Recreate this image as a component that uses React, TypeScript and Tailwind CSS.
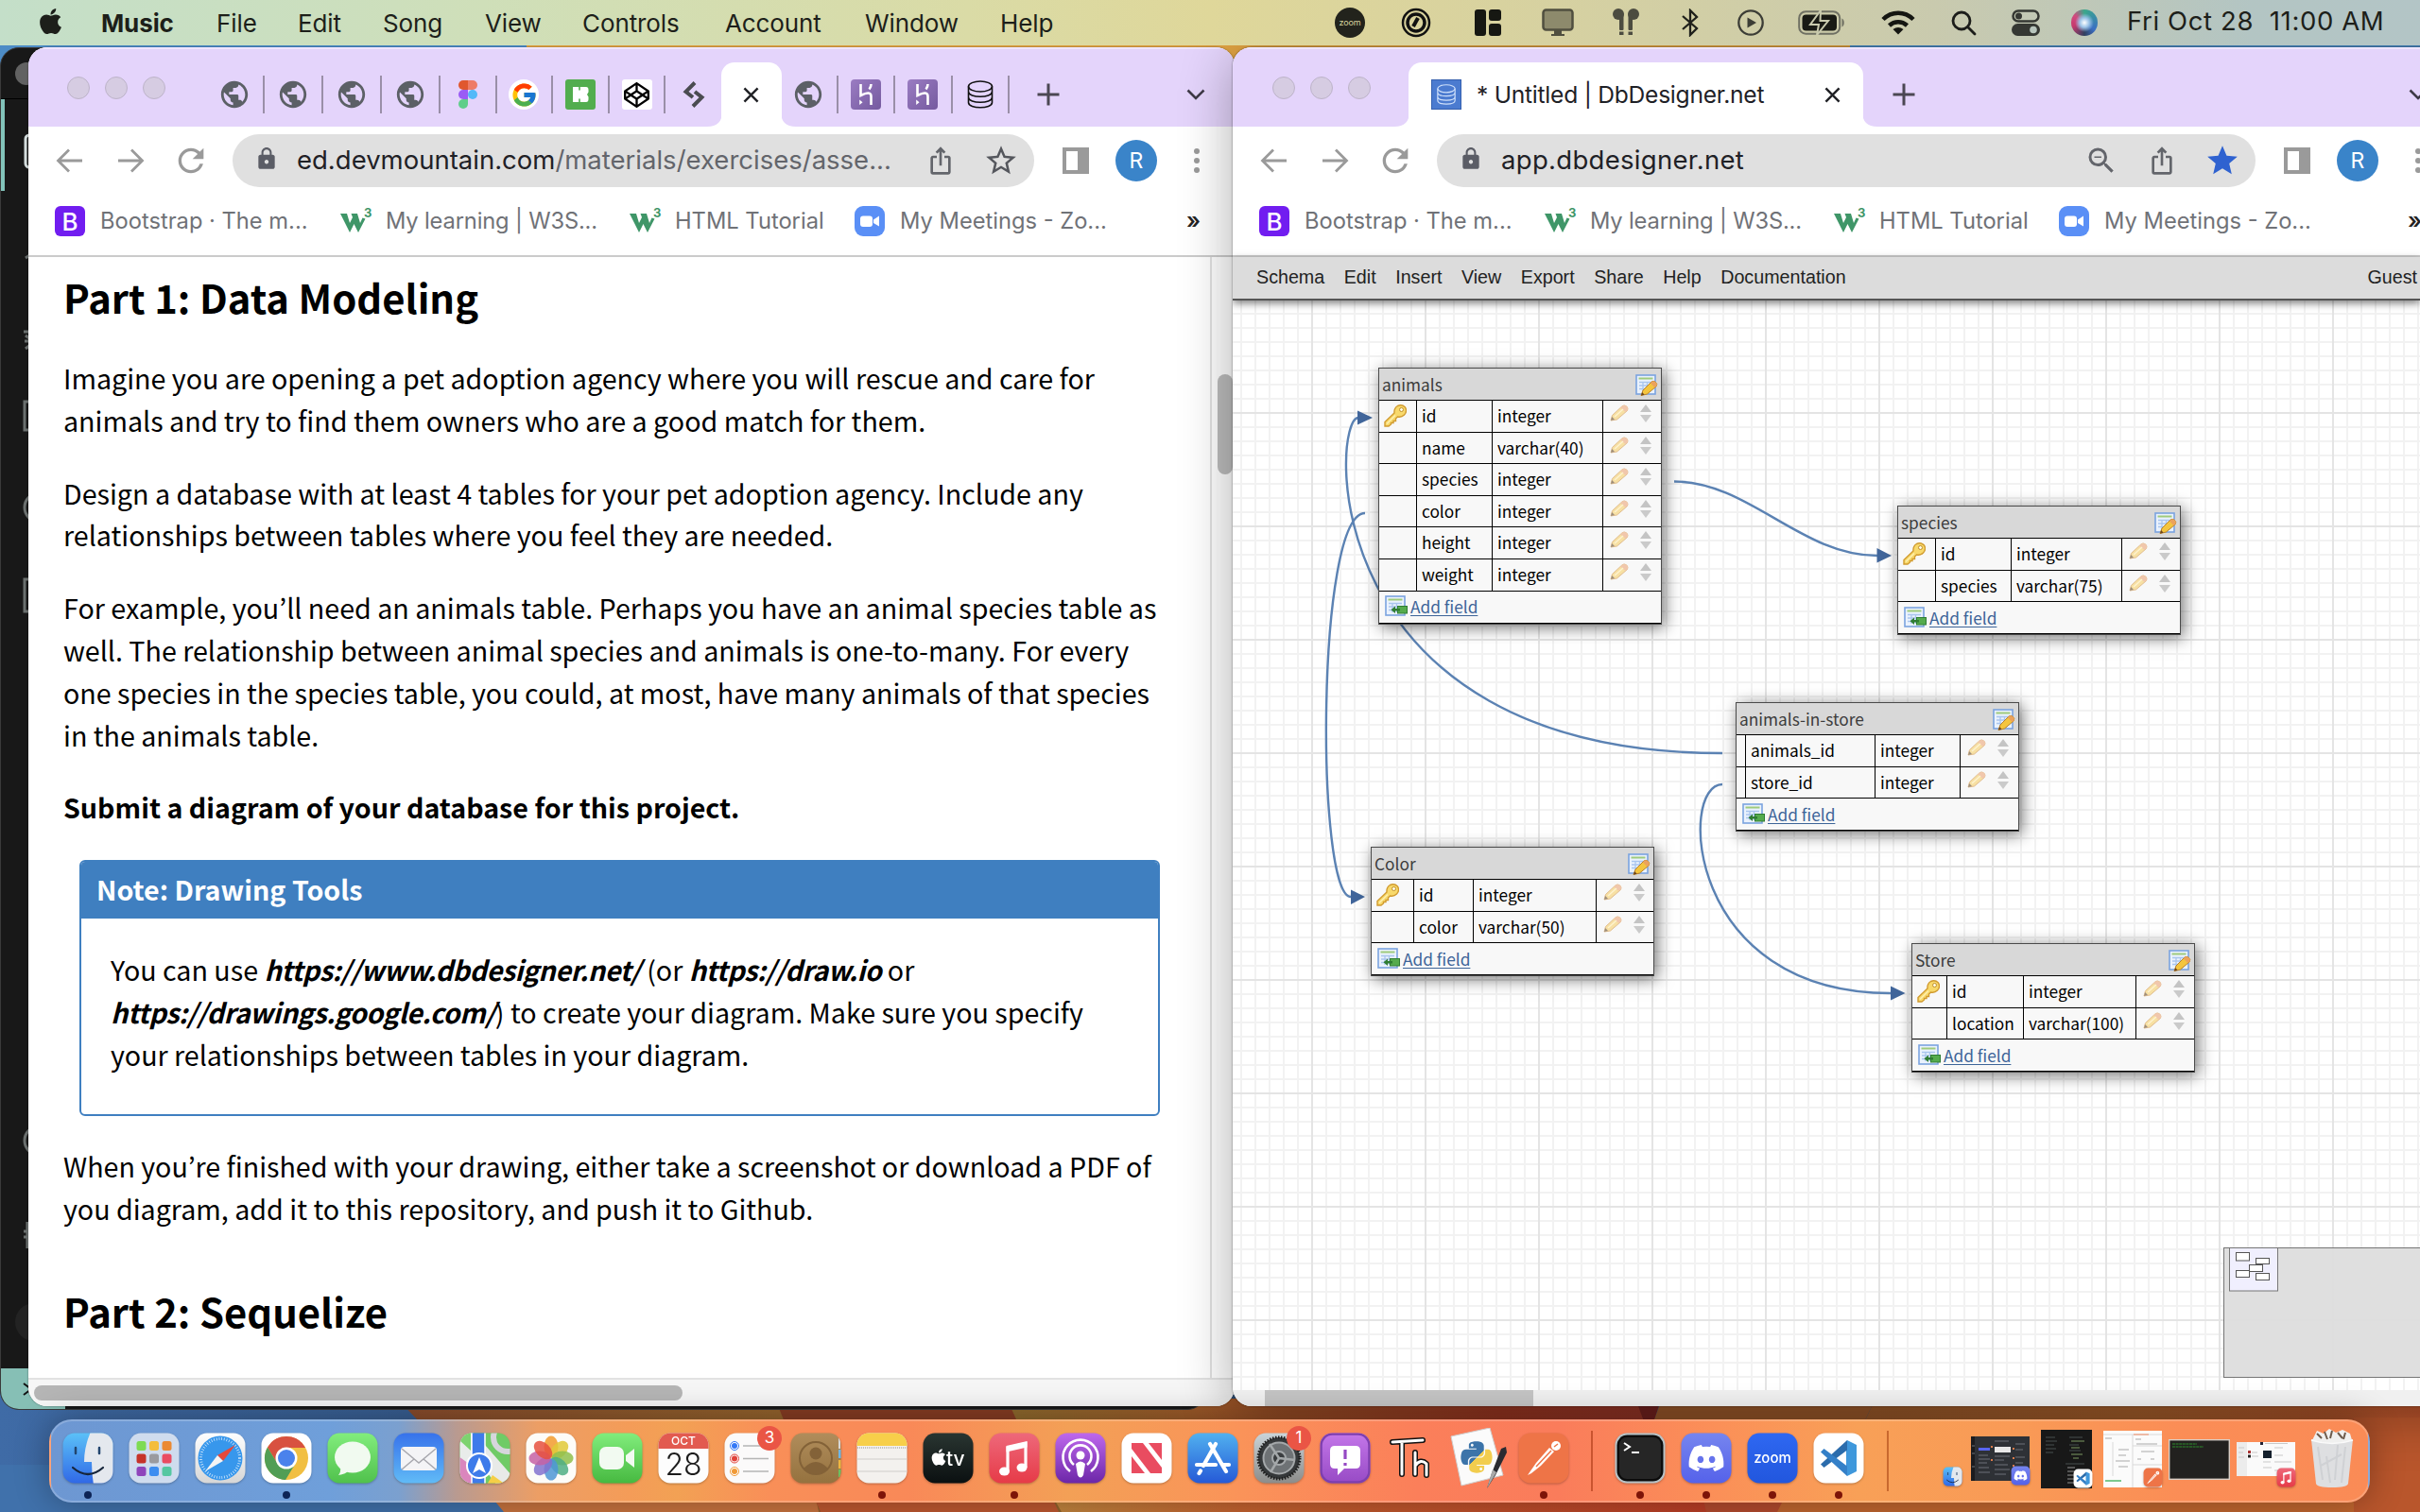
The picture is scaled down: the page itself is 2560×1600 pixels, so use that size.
import React from 'react';
import { FaApple, FaDiscord, FaPython, FaCodepen } from 'react-icons/fa6';
import { FcGoogle } from 'react-icons/fc';
import { MdPublic, MdIosShare, MdRefresh, MdZoomOut, MdStar, MdStarBorder, MdLock } from 'react-icons/md';

type Kids = { children: React.ReactNode };

/* ---------- wallpaper ---------- */
function Wallpaper() {
  return (
    <svg className="absolute inset-0" width="2560" height="1600" viewBox="0 0 2560 1600">
      <defs>
        <linearGradient id="wpBlue" x1="0" x2="1">
          <stop offset="0" stopColor="#3f6ba6" />
          <stop offset="0.35" stopColor="#2f4e78" />
          <stop offset="1" stopColor="#33597f" />
        </linearGradient>
        <linearGradient id="wpBrown" x1="0" x2="1">
          <stop offset="0" stopColor="#874a2b" />
          <stop offset="1" stopColor="#94662c" />
        </linearGradient>
        <linearGradient id="wpMid" x1="0" x2="1">
          <stop offset="0" stopColor="#8c682c" />
          <stop offset="0.35" stopColor="#a15528" />
          <stop offset="0.7" stopColor="#9c3722" />
          <stop offset="1" stopColor="#96352a" />
        </linearGradient>
        <linearGradient id="wpRight" x1="0" x2="1">
          <stop offset="0" stopColor="#9c5a2a" />
          <stop offset="0.5" stopColor="#a8602c" />
          <stop offset="1" stopColor="#b3502a" />
        </linearGradient>
        <linearGradient id="wpLow" x1="0" x2="1">
          <stop offset="0" stopColor="#c1883f" />
          <stop offset="0.3" stopColor="#c4622f" />
          <stop offset="1" stopColor="#b93d26" />
        </linearGradient>
      </defs>
      <rect width="2560" height="1600" fill="#4d8cc6" />
      <rect x="557" y="46" width="1400" height="60" fill="#e0a343" />
      <rect x="0" y="1440" width="2560" height="160" fill="url(#wpBlue)" />
      <rect x="0" y="1550" width="560" height="50" fill="#4071ab" />
      <path d="M420 1480 L535 1600 H900 L820 1480Z" fill="url(#wpBrown)" />
      <path d="M500 1560 L533 1600 H866 L858 1560Z" fill="#c8733f" />
      <path d="M820 1480 L868 1600 H1130 L1065 1480Z" fill="#853b22" />
      <path d="M850 1560 L868 1600 H1130 L1100 1560Z" fill="#be5830" />
      <path d="M1065 1480 L1120 1600 H1810 L1735 1480Z" fill="url(#wpMid)" />
      <path d="M1100 1560 L1123 1600 H1810 L1790 1560Z" fill="url(#wpLow)" />
      <path d="M1730 1480 L1745 1520 L1757 1480Z" fill="#74221f" />
      <path d="M1758 1480 L1740 1530 H1960 L1984 1480Z" fill="#9d5a2b" />
      <path d="M1984 1480 L1960 1530 V1560 H2560 V1480Z" fill="url(#wpRight)" />
      <path d="M1795 1560 L1805 1600 H1882 L1900 1560Z" fill="#b34a2e" />
      <path d="M1900 1560 L1880 1600 H2560 V1560Z" fill="#c0662f" />
      <rect x="2490" y="1500" width="70" height="100" fill="#b9562c" />
    </svg>
  );
}

/* ---------- menu bar ---------- */
const MENU: [string, string][] = [
  ['File', 'w-[86px]'],
  ['Edit', 'w-[90px]'],
  ['Song', 'w-[108px]'],
  ['View', 'w-[103px]'],
  ['Controls', 'w-[151px]'],
  ['Account', 'w-[148px]'],
  ['Window', 'w-[143px]'],
  ['Help', 'w-[80px]'],
];

function MenuBar() {
  return (
    <header className="absolute inset-x-0 top-0 flex h-12 items-center bg-[linear-gradient(90deg,#c4dfc9_0%,#cfdfb9_20%,#dadba6_40%,#dfd79a_50%,#d8d29f_62%,#c9caae_80%,#b3c5c3_93%,#b3c5c6_100%)] pl-[38px] font-['Inter',sans-serif] text-[26px] tracking-[-0.1px] text-[#1d1f1a]">
      <FaApple className="mb-1 mr-[38px] size-[31px]" />
      <span className="w-[122px] font-bold">Music</span>
      {MENU.map(([t, w]) => (
        <span key={t} className={w}>{t}</span>
      ))}
      <div className="ml-[274px] flex h-full items-center">
        <span className="flex size-8 items-center justify-center rounded-full bg-[#22231c] text-[9px] text-[#d8d49f]">zoom</span>
        <svg className="ml-[38px] size-8" viewBox="0 0 32 32" fill="none" stroke="#111" strokeWidth="3">
          <circle cx="16" cy="16" r="14" strokeWidth="2.5" />
          <circle cx="16" cy="16" r="9" strokeWidth="3.5" />
          <path d="M13 20 L18 11" strokeWidth="4" />
        </svg>
        <svg className="ml-[46px] h-[28px] w-[28px]" viewBox="0 0 28 28" fill="#161712">
          <rect width="12" height="28" rx="3" />
          <rect x="15" width="13" height="12" rx="3" />
          <rect x="15" y="15" width="13" height="13" rx="3" />
        </svg>
        <svg className="ml-[43px] h-[30px] w-[34px]" viewBox="0 0 34 30">
          <rect x="1.5" y="1.5" width="31" height="21" rx="3" fill="#8d8a6c" stroke="#504f3f" strokeWidth="2.5" />
          <path d="M13 23h8v4h3v2H10v-2h3z" fill="#504f3f" />
        </svg>
        <svg className="ml-[41px] h-[30px] w-[28px]" viewBox="0 0 28 30" fill="#4c4c40">
          <circle cx="6" cy="6" r="6" />
          <circle cx="22" cy="6" r="6" />
          <rect x="7" y="5" width="4.5" height="18" rx="1" />
          <rect x="16.500" y="5" width="4.500" height="18" rx="1" />
          <rect x="7" y="24.500" width="4.500" height="3.500" />
          <rect x="16.500" y="24.500" width="4.500" height="3.500" />
        </svg>
        <svg className="ml-[44px] h-[30px] w-[20px]" viewBox="0 0 20 30" fill="none" stroke="#1f201b" strokeWidth="2.300">
          <path d="M2 8 L17 21 L10 28 V2 L17 9 L2 22" />
        </svg>
        <svg className="ml-[40px] size-[28px]" viewBox="0 0 28 28">
          <circle cx="14" cy="14" r="12.700" fill="none" stroke="#3c3d36" strokeWidth="2.300" />
          <path d="M10.500 8.500 L20 14 L10.500 19.500Z" fill="#3c3d36" />
        </svg>
        <svg className="ml-[36px] h-[26px] w-[50px]" viewBox="0 0 50 26">
          <rect x="1.200" y="1.200" width="43" height="23.500" rx="7" fill="none" stroke="#6f7063" strokeWidth="2" />
          <rect x="4.500" y="4.500" width="36.500" height="17" rx="4" fill="#191a15" />
          <path d="M46.500 8.500c3 1 3 8 0 9z" fill="#6f7063" />
          <path d="M24 0 L13 15 H22 L20 26 L32 11 H23.500Z" fill="#191a15" stroke="#c9caae" strokeWidth="2" />
        </svg>
        <svg className="ml-[38px] h-[26px] w-[36px]" viewBox="0 0 36 26" fill="none" stroke="#151612" strokeWidth="4.500">
          <path d="M2 9.500 C11 0.500 25 0.500 34 9.500" />
          <path d="M8.500 16 C14 11 22 11 27.500 16" />
          <path d="M18 25.500 L12.500 20 Q18 16 23.500 20Z" fill="#151612" stroke="none" />
        </svg>
        <svg className="ml-[38px] size-[27px]" viewBox="0 0 27 27" fill="none" stroke="#1c1d1a" strokeWidth="2.800" strokeLinecap="round">
          <circle cx="11" cy="11" r="9" />
          <path d="M18 18 L25 25" />
        </svg>
        <svg className="ml-[37px] h-[28px] w-[30px]" viewBox="0 0 30 28">
          <rect x="1.500" y="1.500" width="27" height="11" rx="5.500" fill="none" stroke="#353833" strokeWidth="2.500" />
          <circle cx="7.500" cy="7" r="3.500" fill="#353833" />
          <rect y="15" width="30" height="13" rx="6.500" fill="#353833" />
          <circle cx="23" cy="21.500" r="3.800" fill="#b8c6bd" />
        </svg>
        <span className="ml-[33px] size-[28px] rounded-full bg-[radial-gradient(circle_at_50%_50%,#fff_0%,#9cc4e8_25%,transparent_50%),conic-gradient(#3aa88b,#3a6fc4_35%,#30405e_50%,#c53a6e_70%,#d24a7f_85%,#3aa88b)]" />
        <span className="mb-[3px] ml-[31px] whitespace-pre text-[27.500px] tracking-[0.620px]">Fri Oct 28  11:00 AM</span>
      </div>
    </header>
  );
}

/* ---------- editor window behind ---------- */
function EditorWindow() {
  return (
    <section className="absolute left-0 top-[50px] flex h-[1442px] w-[1276px] flex-col overflow-hidden rounded-[20px] border border-[#3a3a3a] bg-[#181818]">
      <div className="flex h-[54px] items-center border-b border-black pl-[15px]">
        <span className="size-6 rounded-full bg-[#626262]" />
      </div>
      <div className="relative flex-1">
        <span className="absolute left-0 top-0 h-[97px] w-1 bg-[#82c3ba]" />
        <svg className="absolute left-[22px] top-0" width="30" height="1340" viewBox="0 0 30 1340" fill="none" stroke="#6b706f" strokeWidth="3">
          <rect x="4" y="38" width="24" height="34" rx="4" stroke="#d5dede" />
          <path d="M4 168 L10 164" />
          <path d="M2 246h12M3 256h10M4 264l10-8M4 250l8 6" />
          <rect x="3" y="320" width="20" height="30" />
          <circle cx="18" cy="432" r="15" />
          <rect x="3" y="508" width="24" height="34" />
          <circle cx="18" cy="1102" r="15" />
          <path d="M2 1198h14M2 1204h12M6 1188v28" />
        </svg>
        <span className="absolute left-[15px] top-[1274px] size-10 rounded-full bg-[#232323]" />
      </div>
      <div className="flex h-[43px] w-[68px] items-center bg-[#86bfb5] pl-[22px]">
        <svg className="size-4" viewBox="0 0 16 16" fill="none" stroke="#111" strokeWidth="2"><path d="M2 2l8 6-8 6" /></svg>
      </div>
    </section>
  );
}

/* ---------- browser chrome ---------- */
function Lights({ cls }: { cls: string }) {
  return (
    <div className={`flex gap-4 ${cls}`}>
      {[0, 1, 2].map((i) => (
        <span key={i} className="size-6 rounded-full border border-[#bdb3c9] bg-[#d6cce2]" />
      ))}
    </div>
  );
}

function Cross() {
  return (
    <svg className="size-[17px]" viewBox="0 0 18 18" stroke="#222327" strokeWidth="2.600">
      <path d="M1.500 1.500 L16.500 16.500 M16.500 1.500 L1.500 16.500" />
    </svg>
  );
}
function Plus() {
  return (
    <svg className="size-6" viewBox="0 0 24 24" stroke="#4b4753" strokeWidth="3">
      <path d="M12 0.500V23.500M0.500 12H23.500" />
    </svg>
  );
}
function Chevron() {
  return (
    <svg className="h-[12px] w-[20px]" viewBox="0 0 20 12" fill="none" stroke="#3f3a48" strokeWidth="2.600">
      <path d="M1.500 1.500 L10 10 L18.500 1.500" />
    </svg>
  );
}
function FigmaMark() {
  return (
    <svg className="h-[30px] w-[20px]" viewBox="0 0 20 30">
      <path d="M10 0H5a5 5 0 0 0 0 10h5z" fill="#e0572e" />
      <path d="M10 0h5a5 5 0 0 1 0 10h-5z" fill="#ee7b66" />
      <path d="M10 10H5a5 5 0 0 0 0 10h5z" fill="#9a5cf5" />
      <circle cx="15" cy="15" r="5" fill="#53b9f8" />
      <path d="M10 20H5a5 5 0 1 0 5 5z" fill="#5fce8a" />
    </svg>
  );
}
function Cylinder({ stroke, cls }: { stroke: string; cls: string }) {
  return (
    <svg className={cls} viewBox="0 0 28 30" fill="none" stroke={stroke} strokeWidth="1.600">
      <ellipse cx="14" cy="6.500" rx="12.500" ry="5.500" />
      <path d="M1.500 6.500v17c0 7 25 7 25 0v-17M1.500 12c0 7 25 7 25 0M1.500 18c0 7 25 7 25 0" />
    </svg>
  );
}
function TabIcon({ children, line = true, w = 'w-[59.600px]' }: Kids & { line?: boolean; w?: string }) {
  return (
    <div className={`flex h-10 items-center justify-center ${w} ${line ? 'border-r-2 border-[#9a8fa8]' : ''}`}>{children}</div>
  );
}
const Globe = () => <MdPublic className="size-[34px] text-[#5c6066]" />;
function HerokuFav() {
  return (
    <svg className="size-8" viewBox="0 0 32 32" fill="none" stroke="#fff" strokeWidth="2.600">
      <defs>
        <linearGradient id="hk" x1="0" y1="0" x2="1" y2="1">
          <stop offset="0" stopColor="#9a7cc2" />
          <stop offset="1" stopColor="#755a9f" />
        </linearGradient>
      </defs>
      <rect width="32" height="32" rx="4" fill="url(#hk)" stroke="none" />
      <path d="M10.500 5V17Q21.500 11.500 21.500 18V27M21.500 5Q21.500 8 19.500 10.500" />
      <path d="M9.200 21.500L12.500 24.200L9.200 27Z" fill="#fff" stroke="none" />
    </svg>
  );
}

/* flared lower corners that join the active tab to the toolbar */
function Flare({ flip = false }: { flip?: boolean }) {
  return (
    <svg className={`size-4 self-end ${flip ? '-ml-px -mr-4' : '-ml-4 -mr-px'}`} viewBox="0 0 16 16">
      <path d={flip ? 'M0 0 Q0 16 16 16 H0Z' : 'M16 0 Q16 16 0 16 H16Z'} fill="#fff" />
    </svg>
  );
}

function Toolbar({ host, path, zoomed, widthCls, textCls }: { host: string; path?: string; zoomed?: boolean; widthCls: string; textCls: string }) {
  return (
    <div className="flex h-[72px] shrink-0 items-center pl-[28px] text-[#9a9a9a]">
      <svg className="h-[26px] w-[32px]" viewBox="0 0 32 26" fill="none" stroke="currentColor" strokeWidth="2.800">
        <path d="M29 13H4M15 1.500L3.500 13L15 24.500" />
      </svg>
      <svg className="ml-[32px] h-[26px] w-[32px]" viewBox="0 0 32 26" fill="none" stroke="currentColor" strokeWidth="2.800">
        <path d="M3 13H28M17 1.500L28.500 13L17 24.500" />
      </svg>
      <MdRefresh className="ml-[28px] size-[40px]" />
      <div className={`ml-[24px] flex h-14 items-center rounded-full bg-[#e0e0e0] pl-[23px] pr-[16px] ${widthCls}`}>
        <MdLock className="mb-1 size-[26px] text-[#5b5d66]" />
        <span className={`ml-[19px] flex-1 whitespace-nowrap font-['Inter',sans-serif] text-[27.500px] text-[#1f2126] ${textCls}`}>
          {host}
          {path && <span className="text-[#63656b]">{path}</span>}
        </span>
        {zoomed && <MdZoomOut className="mr-[30px] size-[36px] text-[#63656b]" />}
        <MdIosShare className="size-[32px] text-[#63656b]" />
        {zoomed ? <MdStar className="ml-[29px] size-[38px] text-[#2f62d0]" /> : <MdStarBorder className="ml-[29px] size-[38px] text-[#55575d]" />}
      </div>
      <svg className="ml-[30px] size-7" viewBox="0 0 28 28">
        <path d="M0 0H28V28H0Z M4 4V24H16V4Z" fillRule="evenodd" fill="#9a9a9a" />
      </svg>
      <span className="ml-[28px] flex size-11 shrink-0 items-center justify-center rounded-full bg-[#3a84c9] font-['Inter',sans-serif] text-[23px] text-white">R</span>
      <div className="ml-[39px] flex flex-col gap-[4px]">
        {[0, 1, 2].map((i) => (
          <span key={i} className="size-[6px] rounded-full bg-[#9a9a9a]" />
        ))}
      </div>
    </div>
  );
}

function W3() {
  return (
    <svg className="h-[26px] w-[34px] overflow-visible font-['Inter',sans-serif]" viewBox="0 0 34 26">
      <path d="M0 5h7l3 10 3-6-1.500-4h6.500l3 10 2.500-5.500 3 1L19 25l-4.500-9L10 25Z" fill="#3f9668" />
      <text x="25" y="9" fontSize="13" fontWeight="700" fill="#3f9668">3</text>
    </svg>
  );
}

function Bookmarks({ lastCls }: { lastCls: string }) {
  return (
    <div className="flex h-[66px] shrink-0 items-center border-b-2 border-[#cbcbcb] pb-[8px] pl-[28px] font-['Inter',sans-serif] text-[23.700px] text-[#707277]">
      <span className="flex size-8 items-center justify-center rounded-[6px] bg-[#711df0] text-[26px] font-medium text-white">B</span>
      <span className="ml-4 w-[254px] whitespace-nowrap">Bootstrap · The m...</span>
      <W3 />
      <span className="ml-[14px] w-[258px] whitespace-nowrap tracking-[-0.150px]">My learning | W3S...</span>
      <W3 />
      <span className="ml-[14px] w-[190px] whitespace-nowrap">HTML Tutorial</span>
      <svg className="size-8" viewBox="0 0 32 32">
        <rect width="32" height="32" rx="9" fill="#5a8ff6" />
        <rect x="6" y="10.500" width="13" height="11.500" rx="3" fill="#fff" />
        <path d="M20 14.500 L26 10.500V21.500L20 18Z" fill="#fff" />
      </svg>
      <span className={`ml-[16px] whitespace-nowrap ${lastCls}`}>My Meetings - Zo...</span>
      <span className="font-semibold text-[#222]">»</span>
    </div>
  );
}

/* ---------- left browser ---------- */
const Para = ({ children }: Kids) => <p className="mb-[32px] whitespace-nowrap leading-[44.800px]">{children}</p>;
const Url = ({ children }: Kids) => <b className="italic tracking-[-0.450px]">{children}</b>;

function LeftBrowser() {
  return (
    <section className="absolute left-[30px] top-[50px] flex h-[1438px] w-[1276px] flex-col overflow-hidden rounded-[20px] bg-white shadow-[0_0_2px_rgba(0,0,0,0.5)]">
      <div className="flex h-[84px] shrink-0 items-center border-t-2 border-[#f0e6ff] bg-[#e4d4fb]">
        <Lights cls="ml-[41px] mb-px mr-[43px]" />
        <div className="flex h-full items-center pt-[14px]">
          <TabIcon w="w-[62px]"><Globe /></TabIcon>
          <TabIcon w="w-[62px]"><Globe /></TabIcon>
          <TabIcon w="w-[62px]"><Globe /></TabIcon>
          <TabIcon w="w-[62px]"><Globe /></TabIcon>
          <TabIcon><FigmaMark /></TabIcon>
          <TabIcon><span className="flex size-8 items-center justify-center rounded-full bg-white"><FcGoogle className="size-[29px]" /></span></TabIcon>
          <TabIcon>
            <svg className="size-8" viewBox="0 0 32 32">
              <rect width="32" height="32" rx="3" fill="#52ad4e" />
              <path d="M8 8H22Q24.500 8 24.500 11V13.500L23 16L24.500 18.500V21Q24.500 24 22 24H8Z" fill="#fff" />
              <path d="M15 7.500V11.500M15 20.500V24.500" stroke="#52ad4e" strokeWidth="1.600" />
            </svg>
          </TabIcon>
          <TabIcon><span className="flex size-8 items-center justify-center rounded-[3px] bg-white"><FaCodepen className="size-[27px] text-black" /></span></TabIcon>
          <TabIcon line={false}>
            <svg className="h-[28px] w-[24px]" viewBox="0 0 24 28" fill="none" stroke="#4a4b50" strokeWidth="4">
              <path d="M13 1.500 L3.500 11 L11 17 M11 26.500 L20.500 17 L13 11" />
            </svg>
          </TabIcon>
        </div>
        <div className="flex h-full items-end">
          <Flare />
          <div className="flex h-[68px] w-[64px] items-center justify-center rounded-t-[14px] bg-white"><Cross /></div>
          <Flare flip />
        </div>
        <div className="flex h-full items-center pt-[14px]">
          <TabIcon w="w-[60.600px]"><Globe /></TabIcon>
          <TabIcon w="w-[60.600px]"><HerokuFav /></TabIcon>
          <TabIcon w="w-[60.600px]"><HerokuFav /></TabIcon>
          <TabIcon w="w-[60.600px]"><Cylinder stroke="#111" cls="h-[30px] w-[28px]" /></TabIcon>
        </div>
        <div className="ml-[29px] mt-[14px]"><Plus /></div>
        <div className="ml-[134px] mt-[14px]"><Chevron /></div>
      </div>
      <Toolbar host="ed.devmountain.com" path="/materials/exercises/asse..." widthCls="w-[848px]" textCls="" />
      <Bookmarks lastCls="w-[303px]" />
      <div className="flex h-[1186px]">
        <article className="w-[1252px] border-r-2 border-[#e2e2e2] pl-[37px] pt-[11px] font-['Noto_Sans_CJK_KR',sans-serif] text-[28.650px] text-black">
          <h2 className="mb-[32px] text-[41.800px] font-bold leading-[63px]">Part 1: Data Modeling</h2>
          <Para>Imagine you are opening a pet adoption agency where you will rescue and care for<br />animals and try to find them owners who are a good match for them.</Para>
          <Para>Design a database with at least 4 tables for your pet adoption agency. Include any<br />relationships between tables where you feel they are needed.</Para>
          <Para>For example, you’ll need an animals table. Perhaps you have an animal species table as<br />well. The relationship between animal species and animals is one-to-many. For every<br />one species in the species table, you could, at most, have many animals of that species<br />in the animals table.</Para>
          <Para><b>Submit a diagram of your database for this project.</b></Para>
          <div className="ml-[17px] mt-[33px] w-[1143px] overflow-hidden rounded-[6px] border-2 border-[#3f7fc0]">
            <div className="h-[60px] bg-[#3f7fc0] pl-4 font-bold leading-[58px] text-white">Note: Drawing Tools</div>
            <p className="h-[207px] whitespace-nowrap pl-[31px] pt-[31px] leading-[45px]">
              You can use <Url>https://www.dbdesigner.net/</Url> (or <Url>https://draw.io</Url> or<br />
              <Url>https://drawings.google.com/</Url>) to create your diagram. Make sure you specify<br />
              your relationships between tables in your diagram.
            </p>
          </div>
          <p className="mt-[31px] whitespace-nowrap leading-[44.800px]">When you’re finished with your drawing, either take a screenshot or download a PDF of<br />you diagram, add it to this repository, and push it to Github.</p>
          <h2 className="mt-[54px] text-[41.800px] font-bold leading-[63px]">Part 2: Sequelize</h2>
        </article>
        <div className="flex-1 pl-[6px] pt-[124px]">
          <div className="h-[106px] w-4 rounded-full bg-[#bdbdbd]" />
        </div>
      </div>
      <div className="flex-1 border-t-2 border-[#e2e2e2] bg-[#f6f6f6] pl-[6px] pt-[6px]">
        <div className="h-4 w-[686px] rounded-full bg-[#b5b5b5]" />
      </div>
    </section>
  );
}

/* ---------- schema tables ---------- */
function PencilIcon({ cls }: { cls: string }) {
  return (
    <svg className={cls} viewBox="0 0 20 18">
      <path d="M1 17 L2.500 11.500 L13 1.800 Q15 0 17.500 1.800 Q20 4 18.500 6.500 L7.500 16Z" fill="#f7dc95" stroke="#dcb27c" strokeWidth="1" />
      <path d="M13 1.800 Q15 0 17.500 1.800 Q20 4 18.500 6.500 L16.500 8 L11.300 3.500Z" fill="#f0bf9f" />
      <path d="M1 17 L2.200 13 L5 16Z" fill="#8d7b66" />
      <path d="M5 13 L14 5" stroke="#fff2c8" strokeWidth="1.500" />
    </svg>
  );
}
function SheetIcon({ kind }: { kind: 'edit' | 'add' }) {
  return (
    <svg className="size-6 shrink-0" viewBox="0 0 24 24">
      <rect x="1" y="1" width="20" height="20" fill="#eaf2fd" stroke="#7ba3df" strokeWidth="1.600" />
      <path d="M3.500 4.500h15" stroke="#9fcb7c" strokeWidth="2" />
      <path d="M4 8.500h14M4 12h14M4 15.500h14M8 8v10M12.500 8v10" stroke="#a9c5ee" strokeWidth="1.300" />
      {kind === 'edit' ? (
        <g>
          <path d="M6 22.500 L8 17 L17 8 Q19 6.500 21 8 Q24 10.500 22 13 L12.500 21Z" fill="#f4c53e" stroke="#b9822a" strokeWidth="1" />
          <path d="M17 8 Q19 6.500 21 8 Q24 10.500 22 13 L20.500 14.300 L15.800 9.200Z" fill="#eba25c" />
          <path d="M6 22.500 L7.200 19 L9.600 21.800Z" fill="#6b431c" />
        </g>
      ) : (
        <g>
          <rect x="13.500" y="11.500" width="10" height="7.500" fill="#55ab4d" stroke="#2f7d33" />
          <path d="M6.500 15.300 L11 11.500V14h5v2.600h-5V19Z" fill="#2f7d33" />
        </g>
      )}
    </svg>
  );
}
function KeyIcon() {
  return (
    <svg className="size-6" viewBox="0 0 24 24">
      <path d="M1 23 V18.500 L11 9 Q10.500 4 14.500 1.500 Q19 -0.500 22.500 3 Q25 7.500 21.500 11 Q18.500 14 14.500 13 L12.500 15 V17.500 H10 V19.500 H7.500 V21 L5 23Z" fill="#f8d96b" stroke="#d19b2f" strokeWidth="1.400" />
      <circle cx="18.500" cy="5.500" r="2" fill="#fffbe8" stroke="#c08f2c" />
      <path d="M3 20.500 L12 11.500" stroke="#fdf0b0" strokeWidth="1.500" />
    </svg>
  );
}

type Table = { name: string; x: number; y: number; cols: [number, number, number]; rows: [string, string, boolean][] };
const TABLES: Table[] = [
  { name: 'animals', x: 1458, y: 389, cols: [40, 80, 117], rows: [['id', 'integer', true], ['name', 'varchar(40)', false], ['species', 'integer', false], ['color', 'integer', false], ['height', 'integer', false], ['weight', 'integer', false]] },
  { name: 'species', x: 2007, y: 535, cols: [40, 80, 117], rows: [['id', 'integer', true], ['species', 'varchar(75)', false]] },
  { name: 'animals-in-store', x: 1836, y: 743, cols: [10, 137, 90], rows: [['animals_id', 'integer', false], ['store_id', 'integer', false]] },
  { name: 'Color', x: 1450, y: 896, cols: [45, 63, 130], rows: [['id', 'integer', true], ['color', 'varchar(50)', false]] },
  { name: 'Store', x: 2022, y: 998, cols: [37, 81, 119], rows: [['id', 'integer', true], ['location', 'varchar(100)', false]] },
];

function SchemaTable({ t }: { t: Table }) {
  return (
    <div
      className="absolute w-[300px] border border-[#4a4a4a] bg-[#f8f8f8] font-['Noto_Sans_CJK_KR',sans-serif] text-[17.300px] leading-[31px] text-black shadow-[3px_3px_16px_rgba(0,0,0,0.55)]"
      style={{ left: t.x - 1304, top: t.y - 318 }}
    >
      <div className="flex h-[33px] items-center justify-between bg-[#d8d8d8] pl-[3px] pr-[3px] text-[#3c3c3c]">
        <span>{t.name}</span>
        <div className="pt-[3px]"><SheetIcon kind="edit" /></div>
      </div>
      {t.rows.map(([n, ty, key]) => (
        <div key={n} className="grid h-[33.600px] border-t border-black" style={{ gridTemplateColumns: `${t.cols[0]}px ${t.cols[1]}px ${t.cols[2]}px 1fr` }}>
          <div className="border-r border-black pl-[5px] pt-1">{key && <KeyIcon />}</div>
          <div className="border-r border-black pl-[5px]">{n}</div>
          <div className="border-r border-black pl-[5px]">{ty}</div>
          <div className="flex pl-[7px] pt-[4px]">
            <PencilIcon cls="h-[18px] w-[20px] opacity-85" />
            <svg className="ml-3 h-[19px] w-[12px]" viewBox="0 0 12 19">
              <path d="M6 0 L12 8H0Z" fill="#c4c4c4" />
              <path d="M6 19 L12 11H0Z" fill="#cacaca" />
            </svg>
          </div>
        </div>
      ))}
      <div className="flex h-[35px] items-center border-b border-t border-black pl-[6px]">
        <SheetIcon kind="add" />
        <span className="mb-px ml-[3px] text-[#3d6498] underline decoration-1 underline-offset-[2px]">Add field</span>
      </div>
    </div>
  );
}

function Connectors() {
  return (
    <svg className="absolute inset-0" width="1256" height="1154" viewBox="1304 318 1256 1154" fill="none" stroke="#5b82b3" strokeWidth="2.400">
      <path d="M1822 797 C1389 797 1408 442 1437 442" />
      <path d="M1444 543 C1392 543 1392 949 1429 949" />
      <path d="M1771 509.500 C1850 509.500 1905 588 1986 588" />
      <path d="M1822 830 C1775 830 1783 1051 2000 1051" />
      <g fill="#41669b" stroke="none">
        <path d="M1436 434.500 L1452 442 L1436 449.500Z" />
        <path d="M1429 941.500 L1444 949 L1429 957Z" />
        <path d="M1985.500 580 L2001 588 L1985.500 595.500Z" />
        <path d="M2000 1043.500 L2015.500 1051 L2000 1058.500Z" />
      </g>
    </svg>
  );
}

const MINI: [number, number, number, number][] = [
  [7.500, 4.500, 14, 8.500],
  [28.500, 10.500, 14, 6],
  [7.500, 23.500, 14, 7],
  [21.500, 17.500, 14, 7],
  [28.500, 26.500, 14, 7],
];

/* ---------- right browser ---------- */
function RightBrowser() {
  return (
    <section className="absolute left-[1304px] top-[50px] flex h-[1438px] w-[1400px] flex-col overflow-hidden rounded-[20px] bg-white shadow-[0_0_2px_rgba(0,0,0,0.6),0_10px_56px_rgba(0,0,0,0.32)]">
      <div className="flex h-[84px] shrink-0 items-center border-t-2 border-[#f0e6ff] bg-[#e4d4fb]">
        <Lights cls="ml-[42px] mb-px mr-[41px]" />
        <div className="flex h-full items-end">
          <Flare />
          <div className="flex h-[68px] w-[481px] items-center rounded-t-[14px] bg-white pl-[24px] pr-[24px]">
            <span className="flex size-8 items-center justify-center border border-[#345fae] bg-[#4b7bd0]">
              <Cylinder stroke="#cfe0fa" cls="h-[22px] w-[22px]" />
            </span>
            <span className="ml-[16px] flex-1 font-['Inter',sans-serif] text-[24.600px] tracking-[-0.250px] text-[#1f2126]">* Untitled | DbDesigner.net</span>
            <Cross />
          </div>
          <Flare flip />
        </div>
        <div className="ml-[32px] mt-[14px]"><Plus /></div>
        <div className="ml-[522px] mt-[14px]"><Chevron /></div>
      </div>
      <Toolbar host="app.dbdesigner.net" zoomed widthCls="w-[866px]" textCls="tracking-[0.300px]" />
      <Bookmarks lastCls="w-[321px]" />
      <nav className="relative z-10 flex h-[46px] w-[1256px] shrink-0 items-center gap-[20.500px] border-b-2 border-[#555] bg-[#dcdcdc] pl-[25px] font-['Liberation_Sans',sans-serif] text-[19.700px] text-[#222] shadow-[0_3px_8px_rgba(0,0,0,0.5)]">
        {['Schema', 'Edit', 'Insert', 'View', 'Export', 'Share', 'Help', 'Documentation'].map((m) => (
          <span key={m}>{m}</span>
        ))}
        <span className="ml-auto pr-[3px]">Guest</span>
      </nav>
      <div className="relative h-[1153px] w-[1256px] overflow-hidden bg-white bg-[linear-gradient(90deg,#e4e4e4_2px,transparent_2px),linear-gradient(#e4e4e4_2px,transparent_2px),linear-gradient(90deg,#f2f2f2_2px,transparent_2px),linear-gradient(#f2f2f2_2px,transparent_2px)] bg-[length:120px_120px,120px_120px,15px_15px,15px_15px] bg-[position:83px_118px,83px_118px,8px_13px,8px_13px]">
        <Connectors />
        {TABLES.map((t) => (
          <SchemaTable key={t.name} t={t} />
        ))}
        <div className="absolute left-[1048px] top-[1002px] h-[138px] w-[220px] border border-[#757575] bg-[#dededef5]">
          <svg className="ml-[5px]" width="53" height="46" viewBox="0 0 53 46">
            <rect x="0.500" y="-1" width="51" height="46" fill="#f0effe" stroke="#777" />
            {MINI.map(([x, y, w, h]) => (
              <rect key={`${x}-${y}`} x={x} y={y} width={w} height={h} fill="#fff" stroke="#555" />
            ))}
          </svg>
        </div>
      </div>
      <div className="flex-1 bg-[#f0f0f0] pl-[34px]">
        <div className="h-full w-[284px] bg-[#c4c4c4]" />
      </div>
    </section>
  );
}

/* ---------- dock ---------- */
function Tile({ fill, children, id }: { fill: string | [string, string]; children?: React.ReactNode; id: string }) {
  return (
    <svg className="size-[56px] overflow-visible drop-shadow-[0_1px_1px_rgba(0,0,0,0.25)]" viewBox="0 0 56 56">
      {Array.isArray(fill) && (
        <linearGradient id={id} x1="0" y1="0" x2="0" y2="1">
          <stop offset="0" stopColor={fill[0]} />
          <stop offset="1" stopColor={fill[1]} />
        </linearGradient>
      )}
      <clipPath id={`${id}-clip`}><rect x="1.500" y="1.500" width="53" height="53" rx="12.500" /></clipPath>
      <g clipPath={`url(#${id}-clip)`}>
        <rect width="56" height="56" fill={Array.isArray(fill) ? `url(#${id})` : fill} />
        {children}
      </g>
    </svg>
  );
}

function Slot({ children, dot, badge }: Kids & { dot?: string; badge?: string }) {
  return (
    <div className="relative flex h-full w-[70px] shrink-0 flex-col items-center pt-[11px]">
      {children}
      {badge && (
        <span className="absolute left-[43px] top-[5px] flex size-[26px] items-center justify-center rounded-full bg-[#ea5545] font-['Inter',sans-serif] text-[17px] text-white">{badge}</span>
      )}
      {dot && <span className={`mt-[7px] size-2 rounded-full ${dot}`} />}
    </div>
  );
}

function FinderFace({ id }: { id: string }) {
  return (
    <Tile id={id} fill={['#5cc3f8', '#2f66e6']}>
      <path d="M31 0 Q24 16 24 32 H32 Q32 45 34 56 H56 V0Z" fill="#e4e8ee" />
      <path d="M15 17v6M40 17v6" stroke="#22456e" strokeWidth="2.500" strokeLinecap="round" />
      <path d="M12 38 Q28 52 44 38" fill="none" stroke="#17263c" strokeWidth="2.200" strokeLinecap="round" />
    </Tile>
  );
}
function MusicTile({ id }: { id: string }) {
  return (
    <Tile id={id} fill={['#ee6a7c', '#e63946']}>
      <path d="M21 42V17 L40 12.500V38" fill="none" stroke="#fff" strokeWidth="3.200" />
      <path d="M19.500 15 L41.500 10v6.500 L19.500 21.500Z" fill="#fff" />
      <ellipse cx="17.500" cy="42" rx="5.500" ry="4.500" fill="#fff" />
      <ellipse cx="36" cy="38" rx="5.500" ry="4.500" fill="#fff" />
    </Tile>
  );
}
function CodeTile({ id }: { id: string }) {
  return (
    <Tile id={id} fill="#fff">
      <path d="M37 9 L47 14V42L37 47 L36 37V19Z" fill="#3f98dc" />
      <path d="M37 9 L9 34.500 L12.500 38 L37 19.500Z" fill="#2b6cac" />
      <path d="M37 47 L9 21.500 L12.500 18 L37 36.500Z" fill="#3480c8" />
    </Tile>
  );
}
function DiscordTile({ id }: { id: string }) {
  return (
    <Tile id={id} fill={['#7786ef', '#5461ea']}>
      <FaDiscord x="8" y="8" size={40} color="#fff" />
    </Tile>
  );
}
function PostmanTile({ id }: { id: string }) {
  return (
    <Tile id={id} fill="#ee7447">
      <path d="M11 46 L20 33 L34 17 L39 21 L25 36 L15 44Z" fill="#fff" />
      <circle cx="41" cy="15" r="5" fill="#fff" />
      <path d="M20 37 L36 20M39 16l4-3" stroke="#ee7447" strokeWidth="1.500" />
    </Tile>
  );
}

const PETALS: [number, string][] = [
  [0, '#f29b2e'], [45, '#e0c93a'], [90, '#8fbf4c'], [135, '#4fae84'], [180, '#4d97d6'], [225, '#8272cf'], [270, '#c562a4'], [315, '#e6503e'],
];
const PADS = ['#7ddb53', '#f4bd3b', '#eb8a33', '#c6332a', '#9a9a9f', '#ea4c62', '#8f45bb', '#3d8df0', '#55c7a1'];
const DARK = 'bg-[#7d1408]';

function Mini({ cls, children, badge }: Kids & { cls: string; badge?: React.ReactNode }) {
  return (
    <div className={`relative overflow-visible ${cls}`}>
      <div className="size-full overflow-hidden">{children}</div>
      {badge && <div className="absolute -bottom-[4px] right-0 size-[20px] [&>svg]:size-[21px]">{badge}</div>}
    </div>
  );
}

function Dock() {
  return (
    <footer className="absolute left-[52px] top-[1502px] flex h-[88px] w-[2455px] items-start rounded-[24px] border-2 border-white/20 bg-[linear-gradient(90deg,#6d97d2_0%,#6f9fda_12%,#7ba0cf_15%,#b99a90_17.500%,#ec9e65_21%,#f49c58_25%,#f2a154_27%,#f98f58_31%,#f98958_37%,#f3a056_44%,#fa9459_51%,#fb7f5a_59%,#fa7c5b_65%,#fb9058_72%,#f8a057_78%,#f99a56_85%,#fb8d56_92%,#fa8b56_100%)] pl-[4px] shadow-[0_0_36px_rgba(0,0,0,0.32)]">
      <Slot dot="bg-[#0d2456]"><FinderFace id="finder" /></Slot>
      <Slot>
        <Tile id="launch" fill="#cfdcee">
          {PADS.map((c, i) => (
            <rect key={c} x={9.500 + (i % 3) * 13.500} y={10 + Math.floor(i / 3) * 13.500} width="10" height="10" rx="2.500" fill={c} />
          ))}
        </Tile>
      </Slot>
      <Slot>
        <Tile id="safari" fill={['#ffffff', '#d5d5d5']}>
          <circle cx="28" cy="28" r="23.500" fill="#3797ec" />
          <circle cx="28" cy="28" r="20.500" fill="none" stroke="#cfe6fb" strokeWidth="3" strokeDasharray="0.800 1.900" />
          <path d="M44 14 L31 31 L25 25Z" fill="#e5483a" />
          <path d="M12 42 L31 31 L25 25Z" fill="#f4f4f4" />
        </Tile>
      </Slot>
      <Slot dot="bg-[#0d2456]">
        <Tile id="chrome" fill="#fff">
          <circle cx="28" cy="28" r="23" fill="#f1bf42" />
          <path d="M8 16.500 A23 23 0 0 1 48 17 H28 L18 33Z" fill="#d85140" />
          <path d="M8 16.500 A23 23 0 0 0 27 51 L38 33 L28 39 L18 33Z" fill="#519e55" />
          <circle cx="28" cy="28" r="11.500" fill="#fff" />
          <circle cx="28" cy="28" r="9" fill="#4a82ec" />
        </Tile>
      </Slot>
      <Slot>
        <Tile id="messages" fill={['#83ee7e', '#4fc04b']}>
          <ellipse cx="28" cy="27" rx="19" ry="16.500" fill="#f1faf0" />
          <path d="M15 36 Q16 43 13 46 Q21 45 24 41Z" fill="#f1faf0" />
        </Tile>
      </Slot>
      <Slot>
        <Tile id="mail" fill={['#3670ea', '#62bdf7']}>
          <rect x="9" y="16" width="38" height="25" rx="4" fill="#f4f4f6" />
          <path d="M10 18 L28 33 L46 18M10 40 L23 29M46 40 L33 29" fill="none" stroke="#a8a8ae" strokeWidth="1.500" />
        </Tile>
      </Slot>
      <Slot>
        <Tile id="maps" fill="#6fcb66">
          <path d="M0 0H16V56H0Z" fill="#e9ecea" />
          <path d="M0 0H13V20L0 8Z" fill="#7dd36f" />
          <path d="M0 26 L14 36V56H0Z" fill="#da86bd" />
          <path d="M28 14 L56 46 V56 H40 L28 40Z" fill="#e8eae8" />
          <path d="M30 56 L36 46 L50 56Z" fill="#f5cf46" />
          <circle cx="52" cy="6" r="15" fill="none" stroke="#d6d6dc" strokeWidth="6" />
          <rect x="14" y="0" width="14" height="56" fill="#3e7bea" stroke="#fff" strokeWidth="1.500" />
          <circle cx="22" cy="36" r="13" fill="#3e7bea" stroke="#fff" strokeWidth="2" />
          <path d="M22 27 L29 44 L22 40 L15 44Z" fill="#fff" />
        </Tile>
      </Slot>
      <Slot>
        <Tile id="photos" fill="#fdfcf8">
          {PETALS.map(([a, c]) => (
            <ellipse key={a} cx="28" cy="16" rx="7.500" ry="11.500" fill={c} opacity="0.850" transform={`rotate(${a} 28 28)`} />
          ))}
        </Tile>
      </Slot>
      <Slot>
        <Tile id="facetime" fill={['#83ee7e', '#45b83f']}>
          <rect x="9" y="16" width="26" height="24" rx="7" fill="#f2faf1" />
          <path d="M37 25 L46 18V38L37 31Z" fill="#f2faf1" />
        </Tile>
      </Slot>
      <Slot>
        <Tile id="calendar" fill="#fdfdfd">
          <rect width="56" height="18" fill="#e25a50" />
          <g fontFamily="Inter, sans-serif" textAnchor="middle">
            <text x="28" y="14" fontSize="12" fontWeight="500" fill="#fff">OCT</text>
            <text x="28" y="46" fontSize="32" fontWeight="300" fill="#1c1c1c">28</text>
          </g>
        </Tile>
      </Slot>
      <Slot badge="3">
        <Tile id="reminders" fill="#fbfafa">
          {['#3478f6', '#e0443c', '#f09a37'].map((c, i) => (
            <g key={c}>
              <circle cx="12" cy={15 + i * 13.500} r="4.500" fill="#fff" stroke={c} strokeWidth="1" />
              <circle cx="12" cy={15 + i * 13.500} r="3" fill={c} />
              <path d={`M21 ${15 + i * 13.500}H48`} stroke="#b5b5b5" strokeWidth="1.300" />
            </g>
          ))}
        </Tile>
      </Slot>
      <Slot>
        <Tile id="contacts" fill={['#b18d5c', '#94713e']}>
          <circle cx="28" cy="28" r="17" fill="none" stroke="#836238" strokeWidth="2" />
          <circle cx="28" cy="23" r="6.500" fill="#836238" />
          <path d="M15 39 Q28 25 41 39 Q28 50 15 39Z" fill="#836238" />
          <rect x="52" y="6" width="2" height="12" fill="#d8d8d8" />
          <rect x="52" y="19" width="3" height="9" fill="#6fb7e8" />
          <rect x="52" y="30" width="3" height="9" fill="#efb640" />
          <rect x="52" y="40" width="3" height="8" fill="#6cc15f" />
        </Tile>
      </Slot>
      <Slot dot={DARK}>
        <Tile id="notes" fill="#f3f1ee">
          <rect width="56" height="15" fill="#f7cf4a" />
          <path d="M0 17H56" stroke="#8e8e8e" strokeDasharray="1 1" />
          <path d="M0 29H56M0 42H56" stroke="#cfcdca" strokeWidth="1.200" />
        </Tile>
      </Slot>
      <Slot>
        <Tile id="tv" fill={['#2a3632', '#0a0f10']}>
          <FaApple x="8" y="17" size={20} color="#fff" />
          <text x="26" y="36" fontFamily="Inter, sans-serif" fontSize="21" fontWeight="500" fill="#fff">tv</text>
        </Tile>
      </Slot>
      <Slot dot={DARK}><MusicTile id="music" /></Slot>
      <Slot>
        <Tile id="podcasts" fill={['#c06aee', '#6a25a6']}>
          <g fill="none" stroke="#fff" strokeWidth="2.600">
            <path d="M17 42 A18.500 18.500 0 1 1 39 42" />
            <path d="M21 35 A11.500 11.500 0 1 1 35 35" />
          </g>
          <circle cx="28" cy="25" r="4.500" fill="#fff" />
          <path d="M23 34 Q28 29 33 34 L31 46 Q28 51 25 46Z" fill="#fff" />
        </Tile>
      </Slot>
      <Slot>
        <Tile id="news" fill="#fff">
          <path d="M12 12 H24 L44 38V44H32L12 18Z" fill="#e94c60" />
          <path d="M30 12H44V30Z" fill="#e94c60" />
          <path d="M12 26V44H26Z" fill="#e94c60" />
        </Tile>
      </Slot>
      <Slot>
        <Tile id="appstore" fill={['#52b3f0', '#2457d6']}>
          <g stroke="#fff" strokeWidth="4.200" strokeLinecap="round">
            <path d="M31 13 L18 36M25 13 L42 42M11 35H31M38 35H45M15 41.500 L13.500 44" />
          </g>
        </Tile>
      </Slot>
      <Slot badge="1">
        <Tile id="settings" fill={['#ccd6db', '#8a8a88']}>
          <circle cx="28" cy="28" r="22" fill="#35383a" stroke="#1f1f1f" strokeWidth="3" strokeDasharray="1.500 1.500" />
          <circle cx="28" cy="28" r="16.500" fill="#6e7275" stroke="#a4a8aa" strokeWidth="2" />
          <circle cx="28" cy="28" r="7" fill="#3b3e40" stroke="#a4a8aa" strokeWidth="2" />
          <path d="M28 28 L45 30M28 28 L18 13M28 28 L19 43" stroke="#a4a8aa" strokeWidth="2.500" />
        </Tile>
      </Slot>
      <Slot>
        <Tile id="feedback" fill={['#c578ea', '#9649c4']}>
          <rect x="2.500" y="2.500" width="51" height="51" rx="12" fill="none" stroke="#7d3fae" strokeWidth="2.500" />
          <path d="M17 15H39Q44 15 44 20V34Q44 39 39 39H27L20 46V39H17Q12 39 12 34V20Q12 15 17 15Z" fill="#fff" />
          <path d="M28 19v10M28 33v3" stroke="#9649c4" strokeWidth="3.200" />
        </Tile>
      </Slot>
      <Slot>
        <svg className="size-[56px]" viewBox="0 0 56 56" fill="none" strokeLinecap="round" strokeLinejoin="round">
          {[['#111', 6], ['#fff', 3]].map(([c, w]) => (
            <path key={c as string} d="M8 11 L40 9M18 11V45M32 22V45M32 36 Q38 28 44 34V46" stroke={c as string} strokeWidth={w as number} />
          ))}
        </svg>
      </Slot>
      <Slot>
        <svg className="size-[66px] -mt-1 shrink-0" viewBox="0 0 66 66">
          <path d="M5 9 L46 0 L60 50 L16 61Z" fill="#fbfbfb" stroke="#cfcfcf" />
          <linearGradient id="py" x1="0" y1="0" x2="1" y2="1">
            <stop offset="0.500" stopColor="#3c74a9" />
            <stop offset="0.500" stopColor="#f2cd4e" />
          </linearGradient>
          <FaPython x="13" y="12" size={38} style={{ fill: 'url(#py)' }} />
          <path d="M63 20 L58 22 L48 48 L43 64 L52 50 L64 26Z" fill="#2a2b31" />
          <path d="M49 44 L43 64 L53 47Z" fill="#a9a9a9" />
        </svg>
      </Slot>
      <Slot dot={DARK}><PostmanTile id="postman" /></Slot>
      <span className="ml-[15px] mr-[15px] mt-[10px] h-16 w-[2px] shrink-0 bg-[#c9542f]" />
      <Slot dot={DARK}>
        <Tile id="term" fill="#b8c2c6">
          <rect x="3.500" y="3.500" width="49" height="49" rx="11" fill="#0c0c0c" />
          <rect x="6" y="6" width="44" height="44" rx="8" fill="#262626" />
          <path d="M11 12 L17 16 L11 20M19 22H27" fill="none" stroke="#fff" strokeWidth="2" />
        </Tile>
      </Slot>
      <Slot dot={DARK}><DiscordTile id="discord" /></Slot>
      <Slot dot={DARK}>
        <Tile id="zoomapp" fill={['#2f68f2', '#2156dd']}>
          <text x="28" y="33" textAnchor="middle" fontFamily="Inter, sans-serif" fontSize="15" fontWeight="500" fill="#fff">zoom</text>
        </Tile>
      </Slot>
      <Slot dot={DARK}><CodeTile id="code" /></Slot>
      <span className="ml-[16px] mt-[10px] h-16 w-[2px] shrink-0 bg-[#c9692f]" />
      <div className="ml-[57px] mt-[48px] [&>svg]:size-[21px]"><FinderFace id="finder2" /></div>
      <Mini cls="ml-[9px] mt-[16px] h-[47px] w-[62px]" badge={<DiscordTile id="discord2" />}>
        <svg width="62" height="47" viewBox="0 0 62 47">
          <rect width="62" height="47" fill="#2e3136" />
          <rect width="4" height="47" fill="#1b1c1f" />
          <rect x="8" y="12" width="12" height="3" fill="#5865f2" />
          <rect x="25" y="11" width="17" height="6" fill="#e8e8e8" />
          <path d="M1 10h3M1 18h3M1 32h3M8 20h10M8 24h12M8 28h9M8 33h11M8 38h12M25 5h15M25 21h16M25 25h10M25 30h14M25 35h16M25 40h12M47 8h10M47 14h8M47 22h10M47 28h8M47 34h9" stroke="#6c7078" strokeWidth="1" />
          <path d="M22 10v2M22 24v2M45 12v2M45 22v2M45 30v2" stroke="#d97a4a" strokeWidth="2" />
        </svg>
      </Mini>
      <Mini cls="ml-[12px] mt-[9px] h-[62px] w-[54px]" badge={<div className="-mt-[5px] [&>svg]:size-[21px]"><CodeTile id="code2" /></div>}>
        <svg width="54" height="62" viewBox="0 0 54 62">
          <rect width="54" height="62" fill="#181818" />
          <path d="M5 8h10M5 12h12M5 16h9M5 20h11M5 24h8M30 8h14M30 16h10M30 22h12M26 36h20" stroke="#464e4e" strokeWidth="1" />
          <path d="M32 12h14M32 19h9M32 26h12M34 30h6" stroke="#7c9a62" strokeWidth="1" />
          <path d="M28 40h8M28 44h9M28 48h8M28 52h9M28 56h8" stroke="#555" strokeWidth="2" />
        </svg>
      </Mini>
      <Mini cls="ml-[12px] mt-[10px] h-[60px] w-[62px]" badge={<div className="-mt-[5px] [&>svg]:size-[21px]"><PostmanTile id="postman2" /></div>}>
        <svg width="62" height="60" viewBox="0 0 62 60">
          <rect width="62" height="60" fill="#fbfbfb" />
          <path d="M0 4H62M31 4V60M10 12V48M31 16H62M31 36H62" stroke="#d9d9d9" />
          <path d="M2 8h7M34 9h6M16 20h11M16 26h8M13 32h15M16 38h10M35 14h22M40 22h14M36 30h4M50 30h4" stroke="#c5c5c5" strokeWidth="1.500" />
          <path d="M32 4h16" stroke="#ef8a63" />
          <path d="M2 53h17" stroke="#7cc98f" strokeWidth="2" />
        </svg>
      </Mini>
      <Mini cls="ml-[7px] mt-[19px] h-[43px] w-[65px]">
        <svg width="65" height="43" viewBox="0 0 65 43">
          <rect x="0.700" y="0.700" width="63.600" height="41.600" fill="#22211f" stroke="#d9cfc6" strokeWidth="1.400" />
          <path d="M4 5h26M4 8h33" stroke="#2a6a28" strokeWidth="1.500" strokeDasharray="3 0.600" />
        </svg>
      </Mini>
      <Mini cls="ml-[7px] mt-[22px] h-[36px] w-[62px]" badge={<div className="mt-[7px] [&>svg]:size-[21px]"><MusicTile id="music2" /></div>}>
        <svg width="62" height="36" viewBox="0 0 62 36">
          <rect width="62" height="36" fill="#fafafa" />
          <rect width="11" height="36" fill="#ececec" />
          <rect x="12" y="9" width="3" height="3" fill="#a33" />
          <rect x="12" y="13.500" width="3" height="3" fill="#222" />
          <rect x="28" y="9" width="9" height="8" fill="#14202c" />
          <rect x="25" width="3" height="3" fill="#223" />
          <path d="M30 1.500h24M40 6h9M40 14h9M16 11h6M16 15h7M28 21h8M40 21h18M28 27h9M40 30h16M2 6h6M2 11h5M2 16h6" stroke="#c9c9c9" />
        </svg>
      </Mini>
      <svg className="ml-[15px] mt-[7px] h-[64px] w-[48px]" viewBox="0 0 48 64">
        <path d="M2 12 L7 59 Q8 63 24 63 Q40 63 41 59 L46 12Z" fill="#dedfe1" />
        <path d="M9 20 L14 55M18 30 L22 58M30 18 L27 55M38 20 L34 58M12 40 L34 28" stroke="#cfd1d4" strokeWidth="2" />
        <path d="M3 13 L8 3 L15 6 L21 1 L28 5 L35 2 L43 6 L45 13 Q24 20 3 13Z" fill="#f0f0ef" />
        <path d="M8 6l5 5M16 4l3 8M24 3l-2 8M30 5l5 6M38 5l-2 7" stroke="#6d5b4c" strokeWidth="2" />
        <path d="M2 13 Q24 20 46 13" fill="none" stroke="#fafafa" strokeWidth="1.500" />
      </svg>
    </footer>
  );
}

export default function App() {
  return (
    <div className="relative h-[1600px] w-[2560px] overflow-hidden bg-[#4d8cc6]">
      <Wallpaper />
      <EditorWindow />
      <LeftBrowser />
      <RightBrowser />
      <MenuBar />
      <Dock />
    </div>
  );
}
